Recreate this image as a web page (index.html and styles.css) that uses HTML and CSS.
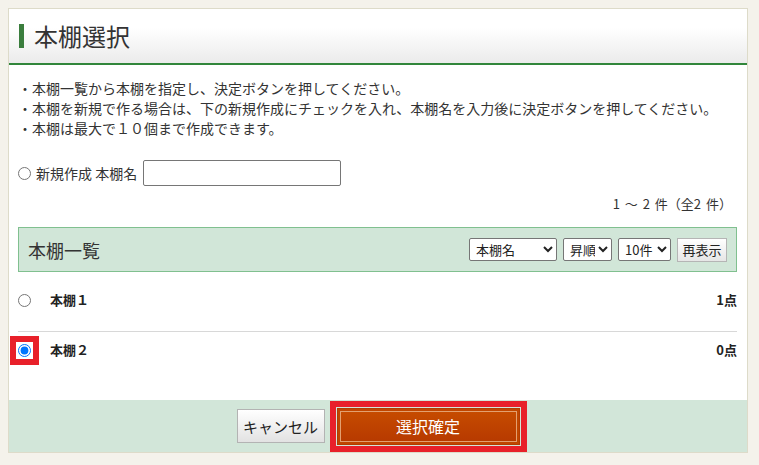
FILE: index.html
```html
<!DOCTYPE html>
<html lang="ja">
<head>
<meta charset="utf-8">
<title>本棚選択</title>
<link rel="stylesheet" href="styles.css">
</head>
<body>
<div class="panel">
  <div class="head">
    <h1 class="title">本棚選択</h1>
  </div>
  <div class="content">
    <ul class="notes">
      <li>・本棚一覧から本棚を指定し、決定ボタンを押してください。</li>
      <li>・本棚を新規で作る場合は、下の新規作成にチェックを入れ、本棚名を入力後に決定ボタンを押してください。</li>
      <li>・本棚は最大で１０個まで作成できます。</li>
    </ul>
    <div class="newrow">
      <input class="radio" type="radio" name="shelf">
      <span class="newlabel">新規作成 本棚名</span>
      <input class="name" type="text">
    </div>
    <div class="count">1 ～ 2 件（全2 件）</div>
    <div class="listhead">
      <span class="lh-title">本棚一覧</span>
      <div class="controls">
        <select class="sel sel-name"><option>本棚名</option></select>
        <select class="sel sel-order"><option>昇順</option></select>
        <select class="sel sel-num"><option>10件</option></select>
        <button class="refresh" type="button">再表示</button>
      </div>
    </div>
    <ul class="rows">
      <li class="row">
        <input class="radio" type="radio" name="shelf">
        <span class="rname">本棚１</span>
        <span class="rcount">1点</span>
      </li>
      <li class="row">
        <input class="radio marked" type="radio" name="shelf" checked>
        <span class="rname">本棚２</span>
        <span class="rcount">0点</span>
      </li>
    </ul>
  </div>
  <div class="foot">
    <button class="cancel" type="button">キャンセル</button>
    <button class="ok" type="button">選択確定</button>
  </div>
</div>
</body>
</html>
```
FILE: styles.css
```css
html, body {
  margin: 0;
  padding: 0;
}
body {
  background: #f4f2eb;
  padding: 8px;
  font-family: "Noto Sans CJK JP", "Noto Sans", sans-serif;
  color: #333;
  font-size: 14px;
}
.panel {
  width: 740px;
  box-sizing: border-box;
  border: 1px solid #dddbc9;
  background: #fff;
}
.head {
  height: 54px;
  border-bottom: 2px solid #31863b;
  background: linear-gradient(#ffffff 35%, #ebebeb);
  display: flex;
  align-items: center;
  padding-left: 10px;
}
.title {
  margin: 0;
  font-size: 24px;
  font-weight: normal;
  line-height: 24px;
  color: #333;
  border-left: 5px solid #3a7d3d;
  padding-left: 10px;
  height: 24px;
  display: flex;
  align-items: center;
}
.content {
  padding: 0 10px 0 9px;
}
.notes {
  list-style: none;
  margin: 13px 0 0;
  padding: 0;
  font-size: 14px;
  line-height: 20px;
}
.newrow {
  margin-top: 22px;
  height: 26px;
  display: flex;
  align-items: center;
}
.radio {
  margin: 0;
  width: 13px;
  height: 13px;
  flex: none;
}
.newlabel {
  margin-left: 5px;
  font-size: 14px;
}
.name {
  margin: 0 0 0 6px;
  width: 198px;
  height: 26px;
  box-sizing: border-box;
  border: 1px solid #767676;
  border-radius: 2px;
}
.count {
  margin-top: 9px;
  line-height: 18px;
  font-size: 13px;
  text-align: right;
  padding-right: 5px;
  word-spacing: 2px;
}
.listhead {
  margin-top: 14px;
  height: 45px;
  box-sizing: border-box;
  border: 1px solid #80c08f;
  background: #d1e6d8;
  display: flex;
  align-items: center;
  justify-content: space-between;
  padding: 0 9px 0 9px;
}
.lh-title {
  font-size: 18px;
}
.controls {
  display: flex;
  gap: 6px;
  align-items: center;
}
.sel {
  height: 23px;
  font-family: "Noto Sans CJK JP", sans-serif;
  font-size: 13px;
  color: #222;
  background: #fff;
  border: 1px solid #767676;
  border-radius: 2px;
  padding: 0 0 0 2px;
  margin: 0;
}
.sel-name { width: 88px; }
.sel-order { width: 49px; }
.sel-num { width: 53px; }
.refresh {
  height: 24px;
  width: 50px;
  padding: 0;
  margin: 0;
  font-family: "Noto Sans CJK JP", sans-serif;
  font-size: 13px;
  color: #222;
  border: 1px solid #b5b5b5;
  background: linear-gradient(#ffffff, #e6e6e6);
}
.rows {
  list-style: none;
  margin: 10px 0 19px;
  padding: 0;
}
.row {
  display: flex;
  align-items: center;
  padding: 9px 0 22px;
  line-height: 18px;
}
.row + .row {
  border-top: 1px solid #d8d8d8;
}
.rname {
  margin-left: 19px;
  font-weight: bold;
  font-size: 13px;
  color: #222;
}
.rcount {
  margin-left: auto;
  font-weight: bold;
  font-size: 13px;
  color: #222;
}
.marked {
  outline: 6px solid #e8202a;
  outline-offset: 2px;
}
.foot {
  height: 52px;
  background: #d2e6d9;
  display: flex;
  align-items: center;
  justify-content: center;
  gap: 12px;
}
.cancel {
  width: 88px;
  height: 34px;
  margin: 0;
  padding: 0;
  font-family: "Noto Sans CJK JP", sans-serif;
  font-size: 15px;
  color: #222;
  border: 1px solid #b3b3b3;
  background: linear-gradient(#ffffff, #e2e2e2);
}
.ok {
  width: 183px;
  height: 37px;
  margin: 0;
  padding: 0;
  font-family: "Noto Sans CJK JP", sans-serif;
  font-size: 16px;
  color: #fff;
  border: 1px solid #b23c00;
  background: linear-gradient(#c74d00, #b63800);
  box-shadow: inset 0 0 0 2px #c04600, inset 0 0 0 3px #e3a070;
  outline: 6px solid #e8202a;
  outline-offset: 1px;
}
```
